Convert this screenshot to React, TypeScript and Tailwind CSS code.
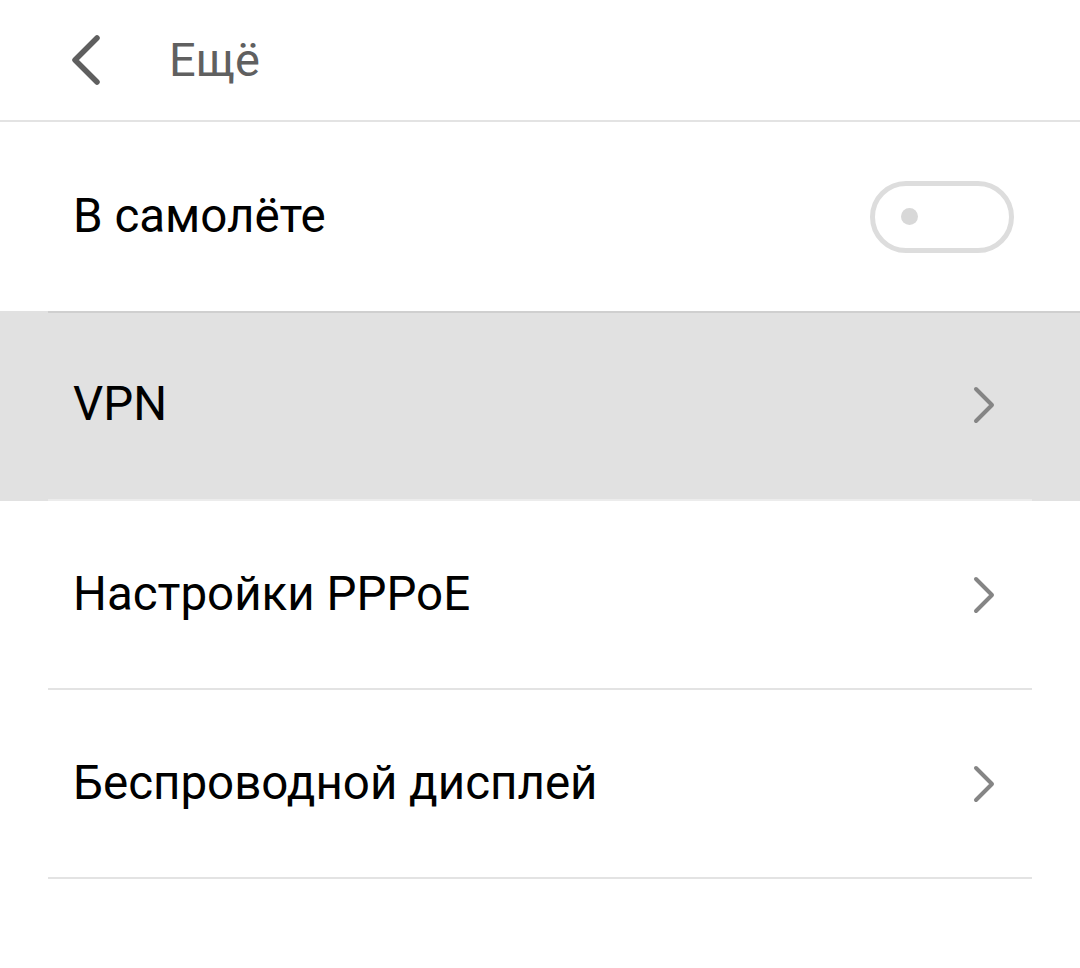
import React from 'react';

const font = { fontFamily: 'Roboto, "Noto Sans", sans-serif' };

function Chevron() {
  return (
    <svg width="30" height="44" viewBox="0 0 30 44" className="shrink-0">
      <path d="M6 6 L22 22 L6 38" fill="none" stroke="#858585" strokeWidth="4" strokeLinecap="round" strokeLinejoin="round" />
    </svg>
  );
}

function Row({ label, active }: { label: string; active?: boolean }) {
  return (
    <div className={active ? 'bg-[#e1e1e1]' : ''}>
      <div className={`mx-12 flex items-center justify-between pl-[25px] pr-[32px] ${active ? 'h-[188px]' : 'h-[187px]'}`}>
        <span className="text-[47.5px] text-black">{label}</span>
        <Chevron />
      </div>
      <div className={`mx-12 h-[2px] ${active ? 'bg-[#ececec]' : 'bg-[#e3e3e3]'}`} />
    </div>
  );
}

export default function App() {
  return (
    <div className="w-[1080px] h-[968px] bg-white overflow-hidden" style={font}>
      {/* Header */}
      <div className="h-[120px] flex items-center">
        <svg width="60" height="60" viewBox="0 0 60 60" className="ml-[55px]">
          <path d="M42 8 L20 30 L42 52" fill="none" stroke="#5f5f5f" strokeWidth="5.5" strokeLinecap="round" strokeLinejoin="round" />
        </svg>
        <span className="ml-[54px] text-[47px] text-[#606060]">Ещё</span>
      </div>
      <div className="h-[2px] bg-[#e3e3e3]" />

      {/* Airplane mode */}
      <div className="h-[189px] flex items-center justify-between pl-[73px] pr-[66px]">
        <span className="text-[47.5px] text-black">В самолёте</span>
        <div className="w-[144px] h-[72px] rounded-full border-[5px] border-[#dddddd] flex items-center pl-[26px]">
          <div className="w-[17px] h-[17px] rounded-full bg-[#d8d8d8]" />
        </div>
      </div>
      <div className="h-[2px] bg-[#cfcfcf] ml-12 -mb-[2px] relative" />

      <Row label="VPN" active />
      <Row label="Настройки PPPoE" />
      <Row label="Беспроводной дисплей" />
    </div>
  );
}
